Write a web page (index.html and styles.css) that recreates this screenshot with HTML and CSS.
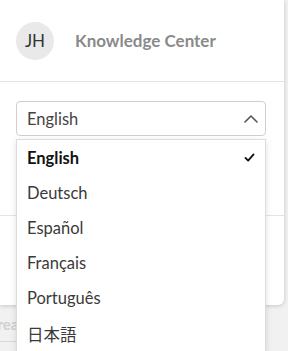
FILE: index.html
```html
<!DOCTYPE html>
<html lang="en">
<head>
    <meta charset="UTF-8">
    <meta name="viewport" content="width=device-width, initial-scale=1.0">
    <title>Knowledge Center</title>
    <link rel="stylesheet" href="styles.css">
</head>
<body>
    <div class="panel">
        <header class="panel-header">
            <div class="avatar">JH</div>
            <h1>Knowledge Center</h1>
        </header>

        <div class="panel-body">
            <div class="select open">
                <span>English</span>
                <svg class="chevron" viewBox="0 0 14 9" fill="none" stroke="currentColor" stroke-width="1.6" stroke-linecap="round" stroke-linejoin="round">
                    <polyline points="1 8 7 2 13 8"></polyline>
                </svg>
            </div>
            <div class="select"></div>
        </div>
        <div class="divider"></div>
    </div>

    <div class="search-row">
        <span class="search-text">Area</span>
    </div>

    <ul class="menu">
        <li class="selected">
            English
            <svg class="check" viewBox="0 0 12 10" fill="none" stroke="currentColor" stroke-width="2" stroke-linecap="round" stroke-linejoin="round">
                <polyline points="1.5 5.5 4.5 8.5 10.5 1.5"></polyline>
            </svg>
        </li>
        <li>Deutsch</li>
        <li>Español</li>
        <li>Français</li>
        <li>Português</li>
        <li lang="ja">日本語</li>
    </ul>
</body>
</html>
```

FILE: styles.css
```css
/* General */
body {
    margin: 0;
    width: 288px;
    height: 351px;
    overflow: hidden;
    background-color: #f1f1f1;
    font-family: 'Lato', 'Noto Sans CJK JP', sans-serif;
    color: #333;
    position: relative;
}

/* Panel */
.panel {
    width: 284px;
    height: 305px;
    background-color: #ffffff;
    border-radius: 0 0 6px 0;
    box-shadow: 0px 1px 4px rgba(0, 0, 0, 0.18);
}

.panel-header {
    height: 82px;
    box-sizing: border-box;
    padding: 0 16px;
    display: flex;
    align-items: center;
    border-bottom: 1px solid #e4e4e4;
}

.avatar {
    width: 38px;
    height: 38px;
    border-radius: 50%;
    background-color: #e9e9e9;
    color: #333;
    font-size: 17px;
    display: flex;
    align-items: center;
    justify-content: center;
    margin-right: 21px;
}

h1 {
    margin: 0;
    font-size: 17px;
    font-weight: bold;
    color: #8a8a8a;
}

.panel-body {
    padding: 19px 16px 0;
    display: flex;
    flex-direction: column;
    gap: 25px;
}

.select {
    width: 250px;
    height: 35px;
    box-sizing: border-box;
    border: 1px solid #cfcfcf;
    border-radius: 4px;
    display: flex;
    align-items: center;
    justify-content: space-between;
    padding: 0 7px 0 10px;
    font-size: 16.5px;
    color: #444;
}

.chevron {
    width: 14px;
    height: 9px;
    color: #555;
}

.divider {
    margin-top: 19px;
    border-top: 1px solid #e4e4e4;
}

/* Below panel */
.search-row {
    height: 46px;
    display: flex;
    align-items: flex-start;
}

.search-text {
    margin-top: 10px;
    margin-left: -13px;
    padding-right: 20px;
    padding-bottom: 8px;
    border-bottom: 1px solid #d8d8d8;
    font-size: 15px;
    font-weight: bold;
    color: #d0d0d0;
}

/* Dropdown menu */
.menu {
    position: absolute;
    top: 139px;
    left: 16px;
    width: 250px;
    box-sizing: border-box;
    margin: 0;
    padding: 0;
    list-style: none;
    background-color: #ffffff;
    border: 1px solid #dcdcdc;
    box-shadow: 0px 2px 6px rgba(0, 0, 0, 0.12);
}

.menu li {
    height: 35.2px;
    display: flex;
    align-items: center;
    justify-content: space-between;
    padding: 0 10px;
    font-size: 16.5px;
    color: #3a3a3a;
}

.menu li.selected {
    font-weight: bold;
    color: #111;
}

.check {
    width: 11px;
    height: 9px;
    color: #111;
}
```
